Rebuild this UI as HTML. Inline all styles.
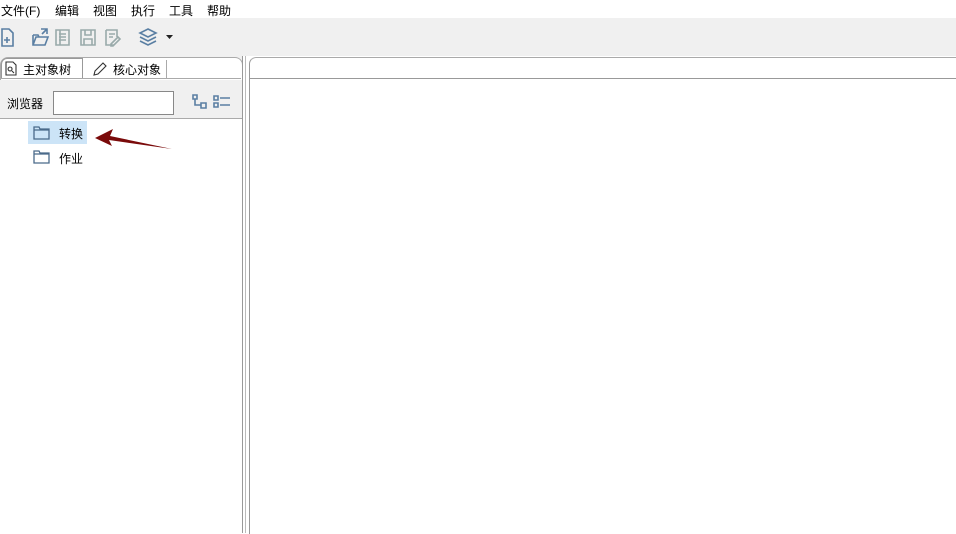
<!DOCTYPE html><html><head><meta charset="utf-8"><style>
body{margin:0;width:956px;height:533px;overflow:hidden;background:#fff;font-family:"Liberation Sans","Noto Sans CJK SC",sans-serif;font-size:12px;color:#000;position:relative}
.a{position:absolute}
</style></head><body>
<div class="a" style="left:0;top:0;width:956px;height:18px;background:#fff"></div>
<div class="a" style="left:1px;top:2px">文件(F)</div>
<div class="a" style="left:55px;top:2px">编辑</div>
<div class="a" style="left:93px;top:2px">视图</div>
<div class="a" style="left:131px;top:2px">执行</div>
<div class="a" style="left:169px;top:2px">工具</div>
<div class="a" style="left:207px;top:2px">帮助</div>
<div class="a" style="left:0;top:18px;width:956px;height:38px;background:#f0f0f0"></div>
<div class="a" style="left:0;top:18px;width:60px;height:1px;background:#fff"></div>
<svg class="a" style="left:0;top:26px" width="180" height="22" fill="none" stroke-width="1.6">
<path d="M2 3h7l4 4v13H2z M7 11v6 M4 14h6" stroke="#5a7fa3"/>
<path d="M33 9v10h12l3-8H36l-3 8 M33 9h5l1 2 M41 3h6v5 M47 3l-5 5" stroke="#5a7fa3"/>
<path d="M56 4h13v15H56z M59 8h7 M59 11h7 M59 14h7 M60 4v15" stroke="#9aa"/>
<path d="M81 4h14v15H81z M85 4v5h6V4 M84 13h8v6h-8z" stroke="#9aa"/>
<path d="M106 4h11v7 M106 4v15h8 M109 8h6 M109 11h4 M111 18l7-7 2 2-7 7h-2z" stroke="#9aa"/>
<path d="M148 3l8 4-8 4-8-4z M140 11l8 4 8-4 M140 15l8 4 8-4" stroke="#5a7fa3"/>
<path d="M166 9h7l-3.5 4z" fill="#222" stroke="none"/>
</svg>
<div class="a" style="left:0;top:56px;width:243px;height:477px;background:#f0f0f0"></div>
<div class="a" style="left:0;top:57px;width:241px;height:22px;border:1px solid #aaa;border-bottom:none;border-radius:8px 8px 0 0;background:#fff"></div>
<div class="a" style="left:1px;top:58px;width:80px;height:20px;border:1px solid #999;border-bottom:none;border-radius:6px 0 0 0;background:#fff;"></div>
<div class="a" style="left:166px;top:60px;width:1px;height:18px;background:#aaa"></div>
<svg class="a" style="left:5px;top:61px" width="160" height="16" fill="none" stroke="#333" stroke-width="1.1"><path d="M1 1h7l3 3v10H1z M5 6a2 2 0 1 0 .1 0 M7 10l2 2"/><path d="M89 14l1-4 8-8 3 3-8 8z"/></svg>
<div class="a" style="left:23px;top:61px">主对象树</div>
<div class="a" style="left:113px;top:61px">核心对象</div>
<div class="a" style="left:0;top:78px;width:241px;height:1px;background:#aaa"></div>
<div class="a" style="left:7px;top:95px">浏览器</div>
<div class="a" style="left:53px;top:91px;width:119px;height:22px;border:1px solid #888;background:#fff"></div>
<svg class="a" style="left:192px;top:94px" width="40" height="16" fill="none" stroke="#5a7fa3" stroke-width="1.6"><path d="M1 1h4v4H1z M9 9h5v5H9z M3 5v6h6"/><path d="M22 2h4v4h-4z M22 9h4v4h-4z M28 4h10 M28 11h10"/></svg>
<div class="a" style="left:0;top:118px;width:242px;height:415px;background:#fff;border-top:1px solid #aaa"></div>
<div class="a" style="left:28px;top:121px;width:59px;height:23px;background:#cce4f7"></div>
<svg class="a" style="left:33px;top:124px" width="20" height="40" fill="none" stroke="#4a6a8a" stroke-width="1.3"><path d="M1 3h5l1 2h9v10H1z M1 6h15"/><path d="M1 27h5l1 2h9v10H1z M1 30h15"/></svg>
<div class="a" style="left:59px;top:125px">转换</div>
<div class="a" style="left:59px;top:150px">作业</div>
<svg class="a" style="left:90px;top:126px" width="85" height="25"><path d="M5 12L23 3L20 10L82 23L19 14L22 20Z" fill="#7a0a0a"/></svg>
<div class="a" style="left:242px;top:56px;width:1px;height:477px;background:#999"></div>
<div class="a" style="left:245px;top:56px;width:1px;height:477px;background:#bbb"></div>
<div class="a" style="left:249px;top:57px;width:707px;height:476px;border-left:1px solid #999;border-top:1px solid #aaa;border-radius:7px 0 0 0;background:#fff"></div>
<div class="a" style="left:250px;top:78px;width:706px;height:1px;background:#999"></div>
</body></html>
